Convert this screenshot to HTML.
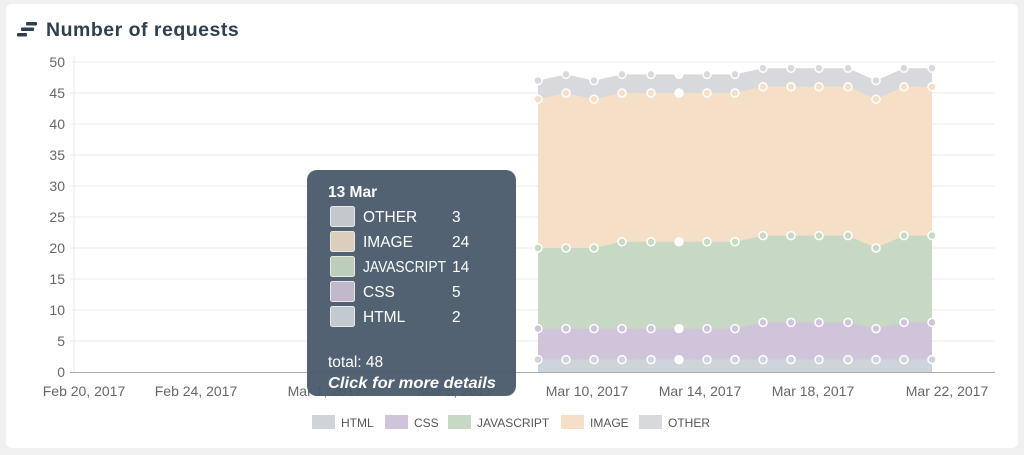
<!DOCTYPE html>
<html><head><meta charset="utf-8"><style>
body{margin:0;background:#f0f0f0;width:1024px;height:455px;overflow:hidden;font-family:"Liberation Sans",sans-serif}
.card{position:absolute;left:6px;top:4px;width:1012px;height:444px;background:#fff;border-radius:6px}
</style></head><body>
<div class="card"></div>
<svg width="1024" height="455" style="position:absolute;left:0;top:0" font-family="Liberation Sans, sans-serif">
<g fill="#2f3f52"><rect x="26" y="22" width="11" height="3.5" rx="1"/><rect x="21" y="27.5" width="13" height="3.5" rx="1"/><rect x="17" y="33" width="10" height="3.5" rx="1"/></g>
<text x="46" y="36" font-size="19.5" font-weight="bold" fill="#2f3f52" letter-spacing="0.5">Number of requests</text>
<g stroke="#ebebeb" stroke-width="1">
<line x1="70" x2="995" y1="62" y2="62"/><line x1="70" x2="995" y1="93" y2="93"/><line x1="70" x2="995" y1="124" y2="124"/><line x1="70" x2="995" y1="155" y2="155"/><line x1="70" x2="995" y1="186" y2="186"/><line x1="70" x2="995" y1="217" y2="217"/><line x1="70" x2="995" y1="248" y2="248"/><line x1="70" x2="995" y1="279" y2="279"/><line x1="70" x2="995" y1="310" y2="310"/><line x1="70" x2="995" y1="341" y2="341"/>
<line x1="74" x2="74" y1="55" y2="372"/>
</g>
<line x1="70" x2="995" y1="372.5" y2="372.5" stroke="#aaa"/>
<g font-size="14" fill="#666" text-anchor="end">
<text x="65" y="67">50</text><text x="65" y="98">45</text><text x="65" y="129">40</text><text x="65" y="160">35</text><text x="65" y="191">30</text><text x="65" y="222">25</text><text x="65" y="253">20</text><text x="65" y="284">15</text><text x="65" y="315">10</text><text x="65" y="346">5</text><text x="65" y="377">0</text>
</g>
<g font-size="14" fill="#666" text-anchor="middle">
<text x="84" y="396">Feb 20, 2017</text><text x="196" y="396">Feb 24, 2017</text><text x="325" y="396">Mar 1, 2017</text><text x="455" y="396">Mar 5, 2017</text><text x="587" y="396">Mar 10, 2017</text><text x="700" y="396">Mar 14, 2017</text><text x="813" y="396">Mar 18, 2017</text><text x="947" y="396">Mar 22, 2017</text>
</g>
<polygon fill="#d8d9dd" points="538,80.6 566,74.4 594,80.6 622,74.4 651,74.4 679,74.4 707,74.4 735,74.4 763,68.2 791,68.2 819,68.2 848,68.2 876,80.6 904,68.2 932,68.2 932,372 538,372"/>
<polygon fill="#f5dfc6" points="538,99.2 566,93 594,99.2 622,93 651,93 679,93 707,93 735,93 763,86.8 791,86.8 819,86.8 848,86.8 876,99.2 904,86.8 932,86.8 932,372 538,372"/>
<polygon fill="#c7d9c5" points="538,248 566,248 594,248 622,241.8 651,241.8 679,241.8 707,241.8 735,241.8 763,235.6 791,235.6 819,235.6 848,235.6 876,248 904,235.6 932,235.6 932,372 538,372"/>
<polygon fill="#d0c4da" points="538,328.6 566,328.6 594,328.6 622,328.6 651,328.6 679,328.6 707,328.6 735,328.6 763,322.4 791,322.4 819,322.4 848,322.4 876,328.6 904,322.4 932,322.4 932,372 538,372"/>
<rect x="538" y="359.6" width="394" height="12.4" fill="#cdd5db"/>
<g stroke="#fff" stroke-width="1.5">
<g fill="#d8d9dd"><circle cx="538" cy="80.6" r="4"/><circle cx="566" cy="74.4" r="4"/><circle cx="594" cy="80.6" r="4"/><circle cx="622" cy="74.4" r="4"/><circle cx="651" cy="74.4" r="4"/><circle cx="679" cy="74.4" r="4" fill="#fff"/><circle cx="707" cy="74.4" r="4"/><circle cx="735" cy="74.4" r="4"/><circle cx="763" cy="68.2" r="4"/><circle cx="791" cy="68.2" r="4"/><circle cx="819" cy="68.2" r="4"/><circle cx="848" cy="68.2" r="4"/><circle cx="876" cy="80.6" r="4"/><circle cx="904" cy="68.2" r="4"/><circle cx="932" cy="68.2" r="4"/></g>
<g fill="#f5dfc6"><circle cx="538" cy="99.2" r="4"/><circle cx="566" cy="93" r="4"/><circle cx="594" cy="99.2" r="4"/><circle cx="622" cy="93" r="4"/><circle cx="651" cy="93" r="4"/><circle cx="679" cy="93" r="4" fill="#fff"/><circle cx="707" cy="93" r="4"/><circle cx="735" cy="93" r="4"/><circle cx="763" cy="86.8" r="4"/><circle cx="791" cy="86.8" r="4"/><circle cx="819" cy="86.8" r="4"/><circle cx="848" cy="86.8" r="4"/><circle cx="876" cy="99.2" r="4"/><circle cx="904" cy="86.8" r="4"/><circle cx="932" cy="86.8" r="4"/></g>
<g fill="#c7d9c5"><circle cx="538" cy="248" r="4"/><circle cx="566" cy="248" r="4"/><circle cx="594" cy="248" r="4"/><circle cx="622" cy="241.8" r="4"/><circle cx="651" cy="241.8" r="4"/><circle cx="679" cy="241.8" r="4" fill="#fff"/><circle cx="707" cy="241.8" r="4"/><circle cx="735" cy="241.8" r="4"/><circle cx="763" cy="235.6" r="4"/><circle cx="791" cy="235.6" r="4"/><circle cx="819" cy="235.6" r="4"/><circle cx="848" cy="235.6" r="4"/><circle cx="876" cy="248" r="4"/><circle cx="904" cy="235.6" r="4"/><circle cx="932" cy="235.6" r="4"/></g>
<g fill="#d0c4da"><circle cx="538" cy="328.6" r="4"/><circle cx="566" cy="328.6" r="4"/><circle cx="594" cy="328.6" r="4"/><circle cx="622" cy="328.6" r="4"/><circle cx="651" cy="328.6" r="4"/><circle cx="679" cy="328.6" r="4" fill="#fff"/><circle cx="707" cy="328.6" r="4"/><circle cx="735" cy="328.6" r="4"/><circle cx="763" cy="322.4" r="4"/><circle cx="791" cy="322.4" r="4"/><circle cx="819" cy="322.4" r="4"/><circle cx="848" cy="322.4" r="4"/><circle cx="876" cy="328.6" r="4"/><circle cx="904" cy="322.4" r="4"/><circle cx="932" cy="322.4" r="4"/></g>
<g fill="#cdd5db"><circle cx="538" cy="359.6" r="4"/><circle cx="566" cy="359.6" r="4"/><circle cx="594" cy="359.6" r="4"/><circle cx="622" cy="359.6" r="4"/><circle cx="651" cy="359.6" r="4"/><circle cx="679" cy="359.6" r="4" fill="#fff"/><circle cx="707" cy="359.6" r="4"/><circle cx="735" cy="359.6" r="4"/><circle cx="763" cy="359.6" r="4"/><circle cx="791" cy="359.6" r="4"/><circle cx="819" cy="359.6" r="4"/><circle cx="848" cy="359.6" r="4"/><circle cx="876" cy="359.6" r="4"/><circle cx="904" cy="359.6" r="4"/><circle cx="932" cy="359.6" r="4"/></g>
</g>
<g font-size="12" fill="#555">
<rect x="312" y="415" width="23" height="14" fill="#cdd5db"/><text x="341" y="427">HTML</text>
<rect x="385" y="415" width="23" height="14" fill="#d0c4da"/><text x="414" y="427">CSS</text>
<rect x="448" y="415" width="23" height="14" fill="#c7d9c5"/><text x="477" y="427">JAVASCRIPT</text>
<rect x="561" y="415" width="23" height="14" fill="#f5dfc6"/><text x="590" y="427">IMAGE</text>
<rect x="639" y="415" width="23" height="14" fill="#d8d9dd"/><text x="668" y="427">OTHER</text>
</g>
<rect x="307" y="170" width="209" height="226" rx="10" fill="#4a5a6a" opacity="0.95"/>
<g fill="#fff" font-size="15.5">
<text x="328" y="197" font-weight="bold">13 Mar</text>
<g stroke="#e8e8e8" stroke-width="1">
<rect x="330.5" y="206.5" width="24" height="20" rx="2" fill="#c3c8cd"/>
<rect x="330.5" y="231.5" width="24" height="20" rx="2" fill="#dccdbd"/>
<rect x="330.5" y="256.5" width="24" height="20" rx="2" fill="#bccdbc"/>
<rect x="330.5" y="281.5" width="24" height="20" rx="2" fill="#c1b9cb"/>
<rect x="330.5" y="306.5" width="24" height="20" rx="2" fill="#c2c9cf"/>
</g>
<text x="363" y="222">OTHER</text><text x="452" y="222">3</text>
<text x="363" y="247">IMAGE</text><text x="452" y="247">24</text>
<text x="363" y="272" textLength="83" lengthAdjust="spacingAndGlyphs">JAVASCRIPT</text><text x="452" y="272">14</text>
<text x="363" y="297">CSS</text><text x="452" y="297">5</text>
<text x="363" y="322">HTML</text><text x="452" y="322">2</text>
<text x="328" y="367">total: 48</text>
<text x="328" y="388" font-weight="bold" font-style="italic" textLength="168" lengthAdjust="spacingAndGlyphs">Click for more details</text>
</g>
</svg>
</body></html>
